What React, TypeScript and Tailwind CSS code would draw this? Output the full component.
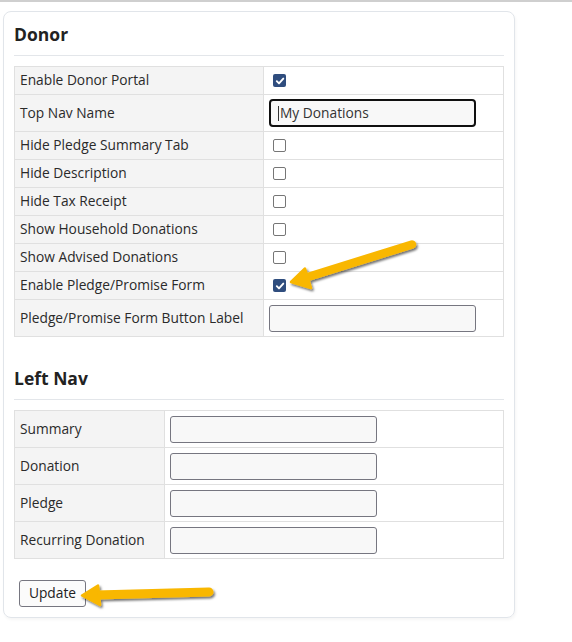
import { ReactNode } from 'react';

const donorRows: { label: string; kind: 'check' | 'text' | 'focus'; checked?: boolean; tall?: boolean }[] = [
  { label: 'Enable Donor Portal', kind: 'check', checked: true },
  { label: 'Top Nav Name', kind: 'focus', tall: true },
  { label: 'Hide Pledge Summary Tab', kind: 'check' },
  { label: 'Hide Description', kind: 'check' },
  { label: 'Hide Tax Receipt', kind: 'check' },
  { label: 'Show Household Donations', kind: 'check' },
  { label: 'Show Advised Donations', kind: 'check' },
  { label: 'Enable Pledge/Promise Form', kind: 'check', checked: true },
  { label: 'Pledge/Promise Form Button Label', kind: 'text', tall: true },
];

const navRows = ['Summary', 'Donation', 'Pledge', 'Recurring Donation'];

function Checkbox({ checked }: { checked?: boolean }) {
  if (checked) {
    return (
      <span className="flex h-[13px] w-[13px] items-center justify-center rounded-[2px] bg-[#2f4d7e]">
        <svg width="10" height="10" viewBox="0 0 10 10">
          <path d="M1.8 5.2 L4 7.4 L8.3 2.6" fill="none" stroke="#fff" strokeWidth="1.9" strokeLinecap="round" strokeLinejoin="round" />
        </svg>
      </span>
    );
  }
  return <span className="block h-[13px] w-[13px] rounded-[2px] border border-[#767676] bg-white" />;
}

function TextBox({ focused, value }: { focused?: boolean; value?: string }) {
  if (focused) {
    return (
      <div className="flex h-[28px] w-[207px] items-center rounded-[4px] border-2 border-[#101010] bg-[#f8f8f8] pl-[7px] text-[13.75px] text-[#333]">
        <span className="mr-[1px] h-[15px] w-px bg-[#333]" />
        {value}
      </div>
    );
  }
  return <div className="h-[27px] w-[207px] rounded-[3px] border border-[#767680] bg-[#f8f8f8]" />;
}

function Row({ labelWidth, tall, label, children, first }: { labelWidth: string; tall?: boolean; label: string; children: ReactNode; first?: boolean }) {
  // first row sits under the container border, so it is one pixel shorter
  const h = tall ? (first ? 'h-[36px]' : 'h-[37px]') : first ? 'h-[27px]' : 'h-[28px]';
  return (
    <div className={`flex ${h} ${first ? '' : 'border-t border-[#e0e0e0]'}`}>
      <div className={`${labelWidth} flex items-center border-r border-[#e0e0e0] bg-[#f4f4f4] pl-[5px] text-[13.75px] text-[#2a2a2a]`}>
        {label}
      </div>
      <div className="flex flex-1 items-center bg-white">{children}</div>
    </div>
  );
}

function Heading({ children }: { children: ReactNode }) {
  return (
    <div className="mb-[10px] border-b border-[#e3e6ea] pb-[10px] text-[17.5px] font-bold leading-[22px] text-[#222]">
      {children}
    </div>
  );
}

export default function App() {
  return (
    <div className="relative h-[642px] w-[572px] bg-white" style={{ fontFamily: '"Open Sans", "Noto Sans", sans-serif' }}>
      <div className="h-[2px] w-full bg-[#cfcfcf]" />
      <div className="ml-[3px] mt-[9px] w-[512px] rounded-[8px] border border-[#e1e5ea] px-[10px] pb-[10px] pt-[11px] shadow-[1px_2px_3px_rgba(0,0,0,0.04)]">
        <Heading>Donor</Heading>
        <div className="border border-[#e0e0e0]">
          {donorRows.map((r, i) => (
            <Row key={r.label} label={r.label} tall={r.tall} first={i === 0} labelWidth="w-[249px]">
              {r.kind === 'check' && (
                <div className="pl-[9px]">
                  <Checkbox checked={r.checked} />
                </div>
              )}
              {r.kind === 'focus' && (
                <div className="pl-[5px]">
                  <TextBox focused value="My Donations" />
                </div>
              )}
              {r.kind === 'text' && (
                <div className="pl-[5px]">
                  <TextBox />
                </div>
              )}
            </Row>
          ))}
        </div>

        <div className="mt-[30px]">
          <Heading>Left Nav</Heading>
        </div>
        <div className="border border-[#e0e0e0]">
          {navRows.map((label, i) => (
            <Row key={label} label={label} tall first={i === 0} labelWidth="w-[150px]">
              <div className="pl-[5px]">
                <TextBox />
              </div>
            </Row>
          ))}
        </div>

        <button className="ml-[5px] mt-[21px] h-[27px] w-[67px] rounded-[3px] border border-[#767680] bg-[#fbfbfb] text-[13.75px] text-[#222]">
          Update
        </button>
      </div>

      <svg className="pointer-events-none absolute left-0 top-0" width="572" height="642" viewBox="0 0 572 642">
        <defs>
          <filter id="shadow" x="-20%" y="-50%" width="140%" height="200%">
            <feDropShadow dx="1.5" dy="2" stdDeviation="1.3" floodColor="#000" floodOpacity="0.55" />
          </filter>
        </defs>
        <g filter="url(#shadow)" fill="#f9b700" stroke="#f9b700" strokeLinejoin="round" strokeLinecap="round">
          <line x1="412" y1="244.5" x2="303" y2="278.5" strokeWidth="8.5" />
          <polygon points="291,282 305,268.5 311,288" strokeWidth="2.5" />
          <line x1="209" y1="592" x2="96" y2="595" strokeWidth="9" />
          <polygon points="82,595.5 98,585.5 100,605" strokeWidth="2.5" />
        </g>
      </svg>
    </div>
  );
}
